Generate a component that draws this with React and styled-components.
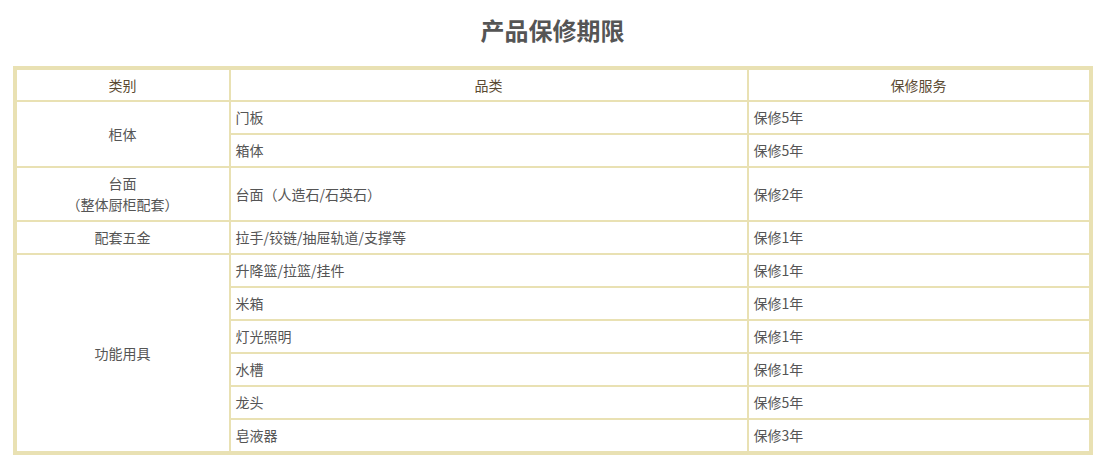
import styled, { createGlobalStyle } from "styled-components";

const GlobalStyle = createGlobalStyle`
  body {
    margin: 0;
    background: #ffffff;
    font-family: "Noto Sans CJK SC", "Noto Sans", sans-serif;
  }
`;

const rows = [
  { cat: ["柜体"], span: 2, item: "门板", service: "保修5年" },
  { item: "箱体", service: "保修5年" },
  { cat: ["台面", "（整体厨柜配套）"], span: 1, item: "台面（人造石/石英石）", service: "保修2年", tall: true },
  { cat: ["配套五金"], span: 1, item: "拉手/铰链/抽屉轨道/支撑等", service: "保修1年" },
  { cat: ["功能用具"], span: 6, item: "升降篮/拉篮/挂件", service: "保修1年" },
  { item: "米箱", service: "保修1年" },
  { item: "灯光照明", service: "保修1年" },
  { item: "水槽", service: "保修1年" },
  { item: "龙头", service: "保修5年" },
  { item: "皂液器", service: "保修3年" },
];

export default function App() {
  return (
    <>
      <GlobalStyle />
      <Page>
        <Title>产品保修期限</Title>
        <Table>
          <colgroup>
            <col style={{ width: 214 }} />
            <col style={{ width: 518 }} />
            <col />
          </colgroup>
          <thead>
            <tr>
              <Th>类别</Th>
              <Th>品类</Th>
              <Th>保修服务</Th>
            </tr>
          </thead>
          <tbody>
            {rows.map((r, i) => (
              <Row key={i} $tall={r.tall}>
                {r.cat && (
                  <Td rowSpan={r.span} $center>
                    {r.cat.map((line) => (
                      <div key={line}>{line}</div>
                    ))}
                  </Td>
                )}
                <Td>{r.item}</Td>
                <Td>{r.service}</Td>
              </Row>
            ))}
          </tbody>
        </Table>
      </Page>
    </>
  );
}

const Page = styled.div`
  width: 1080px;
  margin: 0 auto;
  padding-top: 12px;
`;

const Title = styled.h2`
  margin: 0 0 18px;
  height: 36px;
  line-height: 36px;
  text-align: center;
  font-size: 24px;
  font-weight: bold;
  color: #555555;
`;

const Table = styled.table`
  width: 1080px;
  table-layout: fixed;
  border-collapse: separate;
  border-spacing: 0;
  border: 3px solid #e9e1b3;
  font-size: 14px;
`;

const Th = styled.th`
  box-sizing: border-box;
  height: 32px;
  border: 1px solid #e9e1b3;
  font-weight: normal;
  color: #5b4a32;
  text-align: center;
  line-height: 20px;
  padding: 0;
`;

const Row = styled.tr`
  height: ${(p) => (p.$tall ? "54px" : "33px")};
`;

const Td = styled.td`
  box-sizing: border-box;
  border: 1px solid #e9e1b3;
  color: #555555;
  line-height: 21px;
  padding: 0 5px;
  vertical-align: middle;
  text-align: ${(p) => (p.$center ? "center" : "left")};
`;
